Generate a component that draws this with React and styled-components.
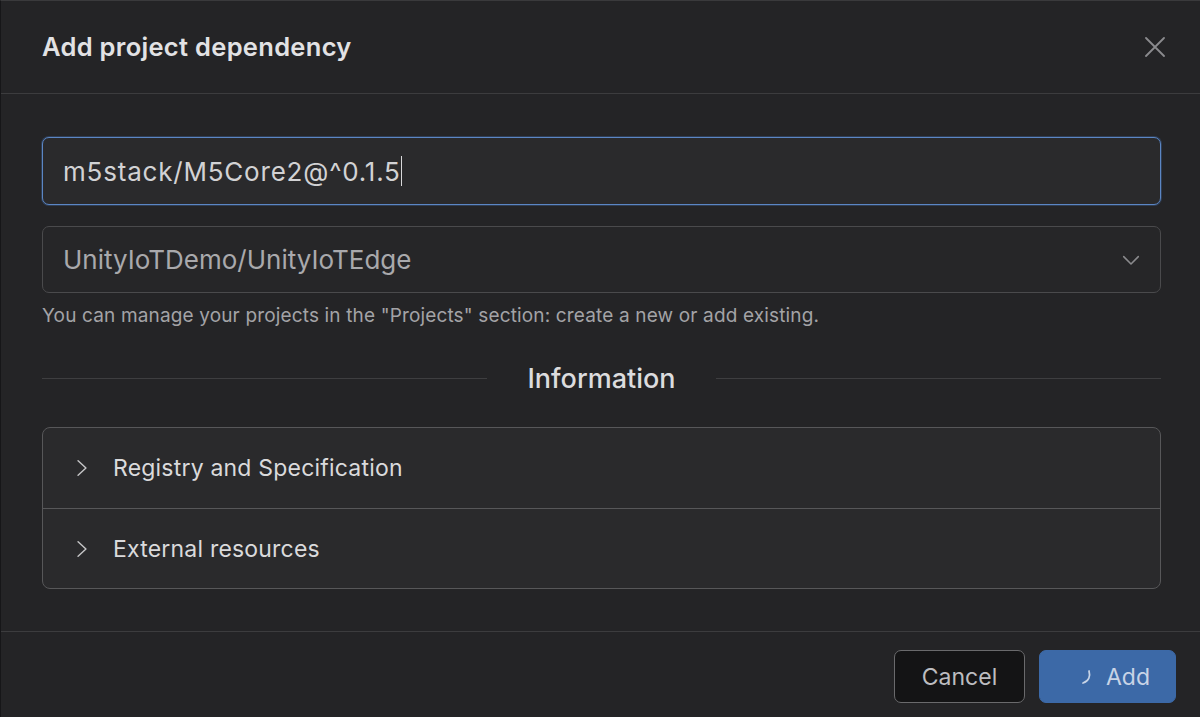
import React from "react";
import styled, { createGlobalStyle } from "styled-components";

const GlobalStyle = createGlobalStyle`
  html, body {
    margin: 0;
    padding: 0;
    background: #1c1c1e;
  }
  body {
    font-family: Inter, "Noto Sans", "Liberation Sans", sans-serif;
  }
`;

const Dialog = styled.div`
  width: 1200px;
  height: 717px;
  box-sizing: border-box;
  background: #242426;
  border-top: 1px solid #3a3a3c;
  border-left: 1px solid #161618;
  display: flex;
  flex-direction: column;
  overflow: hidden;
`;

const Header = styled.div`
  height: 93px;
  box-sizing: border-box;
  display: flex;
  align-items: center;
  justify-content: space-between;
  padding: 0 29px 0 41px;
  border-bottom: 1px solid #3c3c3e;
`;

const Title = styled.h2`
  margin: 0 0 2px;
  font-size: 25.5px;
  font-weight: 600;
  color: #e2e2e4;
  letter-spacing: 0.3px;
`;

const CloseButton = styled.button`
  background: none;
  border: none;
  padding: 6px;
  display: flex;
  color: #8b8b8e;
  cursor: pointer;
`;

const Body = styled.div`
  flex: 1;
  padding: 43px 39px 0 41px;
  display: flex;
  flex-direction: column;
`;

const TextInput = styled.div`
  height: 68px;
  box-sizing: border-box;
  border: 1.5px solid #5b86c4;
  box-shadow: 0 0 0 1px rgba(70, 110, 170, 0.35);
  border-radius: 7px;
  background: #2a2a2c;
  display: flex;
  align-items: center;
  padding: 0 20px;
  font-size: 26px;
  letter-spacing: 0.8px;
  color: #d2d2d4;
`;

const Caret = styled.span`
  display: inline-block;
  width: 1.5px;
  height: 30px;
  background: #d8d8da;
  vertical-align: middle;
`;

const Select = styled.div`
  margin-top: 21px;
  height: 67px;
  box-sizing: border-box;
  border: 1px solid #4a4a4c;
  border-radius: 7px;
  background: #262628;
  display: flex;
  align-items: center;
  justify-content: space-between;
  padding: 0 20px 0 20px;
  font-size: 26px;
  color: #a9a9ac;
`;

const Hint = styled.p`
  margin: 11px 0 0;
  font-size: 19px;
  letter-spacing: 0.15px;
  color: #a3a3a6;
`;

const Divider = styled.div`
  margin-top: 35px;
  display: flex;
  align-items: center;
  gap: 40px;
  &::before,
  &::after {
    content: "";
    flex: 1;
    height: 1px;
    background: #3e3e40;
  }
`;

const DividerLabel = styled.span`
  font-size: 27px;
  font-weight: 500;
  color: #dcdcde;
`;

const Accordion = styled.div`
  margin-top: 32px;
  border: 1.5px solid #575759;
  border-radius: 8px;
  background: #2a2a2c;
  overflow: hidden;
`;

const AccordionItem = styled.div`
  height: 80px;
  box-sizing: border-box;
  display: flex;
  align-items: center;
  padding-left: 30px;
  gap: 22px;
  font-size: 23px;
  letter-spacing: 0.2px;
  color: #dadadc;
  & + & {
    border-top: 1.5px solid #575759;
  }
`;

const Footer = styled.div`
  height: 86px;
  box-sizing: border-box;
  border-top: 1px solid #3c3c3e;
  display: flex;
  align-items: center;
  justify-content: flex-end;
  gap: 14px;
  padding: 4px 24px 0 0;
`;

const Button = styled.button`
  height: 53px;
  box-sizing: border-box;
  border-radius: 7px;
  font-family: inherit;
  font-size: 23px;
  display: flex;
  align-items: center;
  justify-content: ${({ $primary }) => ($primary ? "flex-start" : "center")};
  gap: 13px;
  padding: ${({ $primary }) => ($primary ? "0 0 0 41px" : "0")};
  width: ${({ $w }) => $w}px;
  background: ${({ $primary }) => ($primary ? "#3c69a7" : "#141415")};
  border: 1px solid ${({ $primary }) => ($primary ? "#3c69a7" : "#6a6a6c")};
  color: ${({ $primary }) => ($primary ? "#c8d4e6" : "#bdbdc0")};
`;

const Chevron = ({ dir = "right", size = 16, color = "#bbb", weight = 1.4 }) => (
  <svg
    width={size}
    height={size}
    viewBox="0 0 16 16"
    fill="none"
    stroke={color}
    strokeWidth={weight}
    strokeLinecap="round"
    strokeLinejoin="round"
  >
    {dir === "right" ? (
      <path d="M4.5 1.5 L11.5 8 L4.5 14.5" />
    ) : (
      <path d="M1.5 5 L8 11.5 L14.5 5" />
    )}
  </svg>
);

const Spinner = () => (
  <svg width="12" height="18" viewBox="0 0 12 18" fill="none">
    <path
      d="M8 3 C9.5 8 8 13 2 15"
      stroke="#c8d4e6"
      strokeWidth="1.8"
      strokeLinecap="round"
    />
  </svg>
);

export default function App() {
  return (
    <>
      <GlobalStyle />
      <Dialog>
        <Header>
          <Title>Add project dependency</Title>
          <CloseButton aria-label="Close">
            <svg width="20" height="20" viewBox="0 0 20 20" stroke="#8b8b8e" strokeWidth="1.8" strokeLinecap="round">
              <path d="M1 1 L19 19 M19 1 L1 19" />
            </svg>
          </CloseButton>
        </Header>
        <Body>
          <TextInput>
            m5stack/M5Core2@^0.1.5
            <Caret />
          </TextInput>
          <Select>
            <span>UnityIoTDemo/UnityIoTEdge</span>
            <Chevron dir="down" size={18} color="#8a8a8d" />
          </Select>
          <Hint>
            You can manage your projects in the "Projects" section: create a new or add existing.
          </Hint>
          <Divider>
            <DividerLabel>Information</DividerLabel>
          </Divider>
          <Accordion>
            <AccordionItem>
              <Chevron size={18} weight={1.3} color="#c4c4c6" />
              Registry and Specification
            </AccordionItem>
            <AccordionItem>
              <Chevron size={18} weight={1.3} color="#c4c4c6" />
              External resources
            </AccordionItem>
          </Accordion>
        </Body>
        <Footer>
          <Button $w={131}>Cancel</Button>
          <Button $w={137} $primary>
            <Spinner />
            Add
          </Button>
        </Footer>
      </Dialog>
    </>
  );
}
